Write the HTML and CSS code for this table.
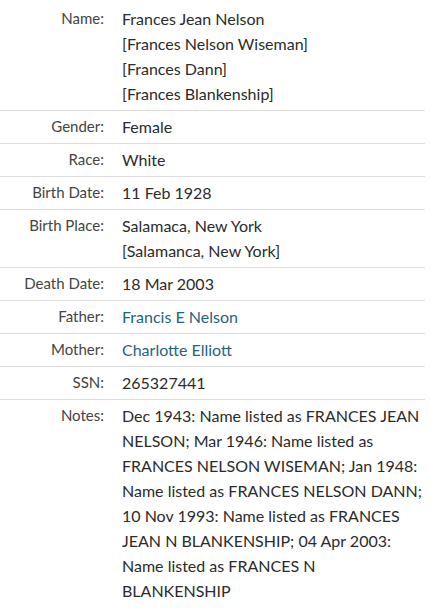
FILE: index.html
```html
<!DOCTYPE html>
<html>
<head>
<meta charset="utf-8">
<link rel="stylesheet" href="styles.css">
</head>
<body>
<div class="record">
  <div class="row first">
    <div class="label">Name:</div>
    <div class="value">Frances Jean Nelson<br>[Frances Nelson Wiseman]<br>[Frances Dann]<br>[Frances Blankenship]</div>
  </div>
  <div class="row">
    <div class="label">Gender:</div>
    <div class="value">Female</div>
  </div>
  <div class="row">
    <div class="label">Race:</div>
    <div class="value">White</div>
  </div>
  <div class="row">
    <div class="label">Birth Date:</div>
    <div class="value">11 Feb 1928</div>
  </div>
  <div class="row">
    <div class="label">Birth Place:</div>
    <div class="value">Salamaca, New York<br>[Salamanca, New York]</div>
  </div>
  <div class="row">
    <div class="label">Death Date:</div>
    <div class="value">18 Mar 2003</div>
  </div>
  <div class="row">
    <div class="label">Father:</div>
    <div class="value"><a class="link" href="#">Francis E Nelson</a></div>
  </div>
  <div class="row">
    <div class="label">Mother:</div>
    <div class="value"><a class="link" href="#">Charlotte Elliott</a></div>
  </div>
  <div class="row">
    <div class="label">SSN:</div>
    <div class="value">265327441</div>
  </div>
  <div class="row last">
    <div class="label">Notes:</div>
    <div class="value">Dec 1943: Name listed as FRANCES JEAN NELSON; Mar 1946: Name listed as FRANCES NELSON WISEMAN; Jan 1948: Name listed as FRANCES NELSON DANN; 10 Nov 1993: Name listed as FRANCES JEAN N BLANKENSHIP; 04 Apr 2003: Name listed as FRANCES N BLANKENSHIP</div>
  </div>
</div>
</body>
</html>
```
FILE: styles.css
```css
html, body {
  margin: 0;
  padding: 0;
  background: #fff;
}
body {
  font-family: Lato, "Noto Sans", sans-serif;
  color: #2b2b2b;
}
.record {
  width: 425px;
}
.row {
  display: flex;
  border-bottom: 1px solid #dddddd;
  padding: 3px 0 4px;
  line-height: 25px;
}
.row.first {
  padding-top: 6px;
}
.row.last {
  border-bottom: none;
}
.label {
  width: 104px;
  flex: none;
  text-align: right;
  font-size: 15px;
  color: #444;
}
.value {
  flex: 1;
  margin-left: 18px;
  font-size: 16px;
  color: #2b2b2b;
}
.link {
  color: #1f6480;
  text-decoration: none;
}
```
